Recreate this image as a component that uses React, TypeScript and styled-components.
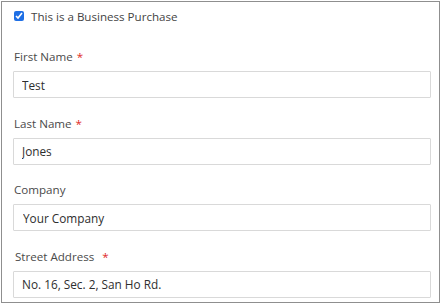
import React, { useState } from "react";
import styled, { createGlobalStyle } from "styled-components";

const GlobalStyle = createGlobalStyle`
  html, body {
    margin: 0;
    padding: 0;
    background: #fff;
  }
  body {
    font-family: "Open Sans", "Liberation Sans", sans-serif;
    color: #333;
  }
`;

const Frame = styled.div`
  box-sizing: border-box;
  width: 439px;
  height: 302px;
  margin: 1px 0 0 1px;
  border: 1px solid #8f8f8f;
  padding: 5px 9px 0 11px;
  overflow: hidden;
`;

const CheckRow = styled.label`
  display: flex;
  align-items: center;
  gap: 7px;
  height: 18px;
  font-size: 11.6px;
  color: #444;
  cursor: pointer;
`;

const Check = styled.input`
  width: 10px;
  height: 10px;
  margin: 0 0 0 1px;
  accent-color: #1f6fe5;
`;

const Field = styled.div<{ $first?: boolean }>`
  display: flex;
  flex-direction: column;
  margin-top: ${({ $first }) => ($first ? "24px" : "17.5px")};
`;

const Label = styled.label<{ $nudge?: number }>`
  font-size: 11.6px;
  line-height: 16px;
  color: #4a4a4a;
  margin: 0 0 6px ${({ $nudge }) => $nudge ?? 1}px;
`;

const Required = styled.span<{ $wide?: boolean }>`
  color: #e02b27;
  margin-left: ${({ $wide }) => ($wide ? "8px" : "4px")};
`;

const Input = styled.input<{ $indent?: number }>`
  box-sizing: border-box;
  width: 418px;
  height: 27px;
  border: 1px solid #d9d9d9;
  border-radius: 1px;
  padding: 0 0 0 ${({ $indent }) => $indent ?? 8}px;
  font-family: inherit;
  font-size: 11.8px;
  color: #2e2e2e;
  background: #fff;
  outline: none;
`;

interface FieldDef {
  id: string;
  label: string;
  value: string;
  required?: boolean;
  wideStar?: boolean;
  nudge?: number;
  indent?: number;
}

const fields: FieldDef[] = [
  { id: "firstname", label: "First Name", value: "Test", required: true },
  { id: "lastname", label: "Last Name", value: "Jones", required: true },
  { id: "company", label: "Company", value: "Your Company", indent: 9 },
  {
    id: "street",
    label: "Street Address",
    value: "No. 16, Sec. 2, San Ho Rd.",
    required: true,
    wideStar: true,
    nudge: 2,
  },
];

const App = () => {
  const [business, setBusiness] = useState(true);
  const [values, setValues] = useState<Record<string, string>>(
    Object.fromEntries(fields.map((f) => [f.id, f.value]))
  );

  return (
    <>
      <GlobalStyle />
      <Frame>
        <CheckRow>
          <Check
            type="checkbox"
            checked={business}
            onChange={() => setBusiness(!business)}
          />
          This is a Business Purchase
        </CheckRow>
        {fields.map((f, i) => (
          <Field key={f.id} $first={i === 0}>
            <Label htmlFor={f.id} $nudge={f.nudge}>
              {f.label}
              {f.required && <Required $wide={f.wideStar}>*</Required>}
            </Label>
            <Input
              id={f.id}
              $indent={f.indent}
              value={values[f.id]}
              onChange={(e) => setValues({ ...values, [f.id]: e.target.value })}
            />
          </Field>
        ))}
      </Frame>
    </>
  );
};

export default App;
